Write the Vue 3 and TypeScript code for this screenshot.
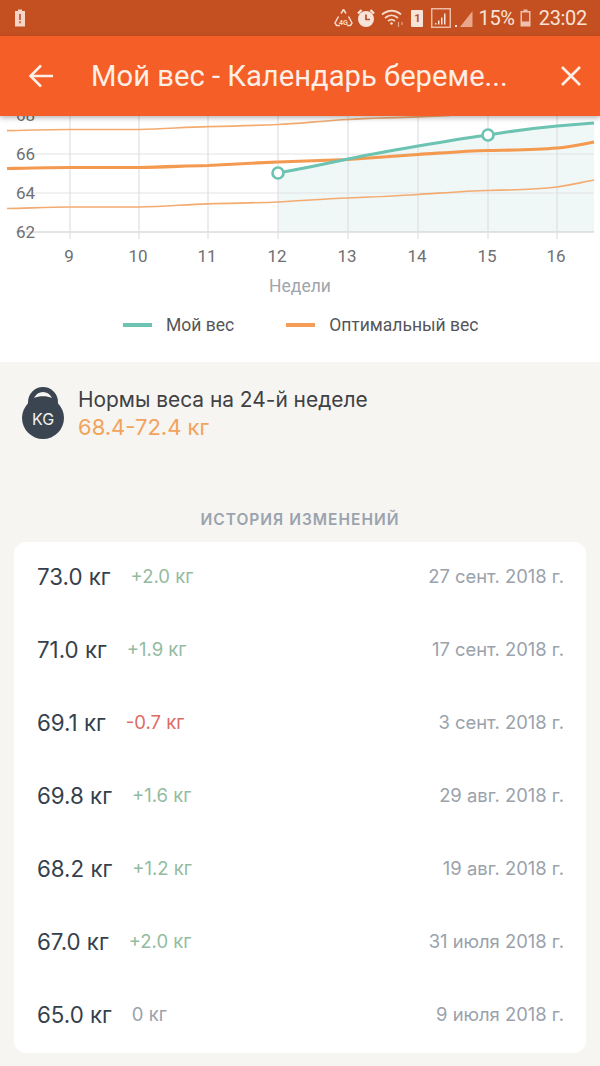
<script setup lang="ts">
interface Row { value: string; delta: string; tone: string; date: string }
const rows: Row[] = [
  { value: '73.0 кг', delta: '+2.0 кг', tone: 'up', date: '27 сент. 2018 г.' },
  { value: '71.0 кг', delta: '+1.9 кг', tone: 'up', date: '17 сент. 2018 г.' },
  { value: '69.1 кг', delta: '-0.7 кг', tone: 'down', date: '3 сент. 2018 г.' },
  { value: '69.8 кг', delta: '+1.6 кг', tone: 'up', date: '29 авг. 2018 г.' },
  { value: '68.2 кг', delta: '+1.2 кг', tone: 'up', date: '19 авг. 2018 г.' },
  { value: '67.0 кг', delta: '+2.0 кг', tone: 'up', date: '31 июля 2018 г.' },
  { value: '65.0 кг', delta: '0 кг', tone: 'zero', date: '9 июля 2018 г.' },
]
const gridX = [70, 139, 208, 278, 348, 418, 488, 557]
const weeks = [9, 10, 11, 12, 13, 14, 15, 16]
const gridY = [
  { y: 115, label: '68' },
  { y: 154, label: '66' },
  { y: 193, label: '64' },
  { y: 232, label: '62' },
]
const teal = 'M278 173 C300 169 325 164 348 159 C372 154 395 150 418 146 C442 142 465 138 488 135 C512 131 535 128 557 126 L594 123'
const tealFill = teal + ' L594 232 L278 232 Z'
const mid = 'M7 168.5 C30 168 50 167.5 70 167.5 L139 167.5 C165 167 185 166 208 165.5 C235 164 255 163 278 162 C300 161 325 160.5 348 159.5 C372 158 395 156 418 154.5 C442 153 465 151 488 150.5 C512 150 535 150 557 148 C572 147 583 144 594 142'
const up = 'M7 130.7 C30 130 50 129.5 70 129.5 L139 129.5 C165 129 185 127 208 126.6 C235 126 255 125.5 278 124.5 C300 123.5 325 120.5 348 119.5 C372 118 395 118 418 116.8 L450 115.5'
const low = 'M7 208.5 C30 208 50 207 70 207 L139 207 C165 206.5 185 204.5 208 203.8 C235 203 255 203 278 202 C300 201 325 198.5 348 198 C372 197 395 196 418 194.5 C442 193 465 191 488 190.5 C512 190 535 189.5 557 187 C572 185 583 182 594 180'
</script>

<template>
  <div class="page">
    <div class="status">
      <svg class="batt-low" width="12" height="18" viewBox="0 0 12 18">
        <path d="M4 0.5h4v1.500h3v15.500H1V2h3z" fill="#f7d4c4" />
        <rect x="5.200" y="5" width="1.600" height="6" fill="#b5502c" />
        <rect x="5.200" y="12.400" width="1.600" height="1.800" fill="#b5502c" />
      </svg>
      <div class="status-right">
        <svg class="ic-net" width="19" height="20" viewBox="0 0 19 20" fill="none" stroke="#f7d9cc" stroke-width="1.500">
          <path d="M9.500 1.500l2.500 4M7 5.500l2.500-4M4.500 8.500L1 15l1.500 2.500H6M14.500 8.500L18 15l-1.500 2.500H13" />
          <text x="9.500" y="17" text-anchor="middle" class="lte">4G</text>
        </svg>
        <svg class="ic-alarm" width="20" height="20" viewBox="0 0 20 20">
          <circle cx="10" cy="11" r="8" fill="#f7e3d8" />
          <path d="M2 5.500L5.500 2M18 5.500L14.500 2" stroke="#f7e3d8" stroke-width="2.400" />
          <path d="M10 6.500V11.500H14" stroke="#b5502c" stroke-width="1.700" fill="none" />
        </svg>
        <svg class="ic-wifi" width="26" height="20" viewBox="0 0 26 20" fill="none" stroke="#f7d9cc" stroke-width="1.800">
          <path d="M1 6.500C7 1.500 14.500 1.500 20 6.500M4 10C8 6.500 13 6.500 17 10M7 13C9.500 11 11.500 11 14 13" />
          <circle cx="10.500" cy="15.500" r="1.300" fill="#f7d9cc" stroke="none" />
          <path d="M17.500 14v5M21 14v3" stroke-width="1.200" stroke="#e8a68c" />
        </svg>
        <span class="sim">1</span>
        <svg class="ic-box" width="20" height="20" viewBox="0 0 20 20">
          <rect x="0.750" y="0.750" width="18.500" height="18.500" fill="none" stroke="#f0c2ae" stroke-width="1.400" />
          <path d="M4 15h1.500v1.500H4zM7 12.500h1.500v4H7zM10 9.500h1.500v7H10zM13 5.500h1.500v11H13z" fill="#f7e3d8" />
        </svg>
        <svg class="signal" width="18" height="20" viewBox="0 0 18 20">
          <path d="M17.500 3v16H5z" fill="#e8a68c" />
          <rect x="0" y="17" width="2" height="2" fill="#f7e3d8" />
        </svg>
        <span class="pct">15%</span>
        <svg class="ic-batt" width="11" height="18" viewBox="0 0 11 18">
          <path d="M3.500 0.500h4V2h3v15.500H.5V2h3z" fill="#f0c2ae" />
          <rect x="2" y="3.500" width="7" height="9" fill="#c4532a" />
        </svg>
        <span class="time">23:02</span>
      </div>
    </div>

    <header class="bar">
      <svg class="back" width="26" height="26" viewBox="0 0 26 26" fill="none" stroke="#fdeee6" stroke-width="2.600">
        <path d="M25 13H2.500M13 2.500L2.500 13 13 23.500" />
      </svg>
      <div class="title">Мой вес - Календарь береме...</div>
      <svg class="close" width="22" height="22" viewBox="0 0 22 22" fill="none" stroke="#fdeee6" stroke-width="2.600">
        <path d="M2 2l18 18M20 2L2 20" />
      </svg>
    </header>

    <section class="chart">
      <svg class="plot" width="600" height="186" viewBox="0 116 600 186">
        <path :d="tealFill" fill="#eff7f7" />
        <line v-for="g in gridY" :key="g.y" x1="16" x2="594" :y1="g.y" :y2="g.y" :stroke="g.y === 232 ? '#c9c9cc' : '#e4e3e6'" stroke-width="1.200" />
        <line v-for="x in gridX" :key="x" :x1="x" :x2="x" y1="116" y2="239" stroke="#dfdee1" stroke-width="1.200" />
        <path :d="up" fill="none" stroke="#f4ab70" stroke-width="1.700" />
        <path :d="low" fill="none" stroke="#f4ab70" stroke-width="1.700" />
        <path :d="mid" fill="none" stroke="#f49a50" stroke-width="3.200" />
        <path :d="teal" fill="none" stroke="#6cc3b2" stroke-width="3" />
        <circle cx="278" cy="173" r="5.500" fill="#fff" stroke="#6cc3b2" stroke-width="2.600" />
        <circle cx="488" cy="135" r="5.500" fill="#fff" stroke="#6cc3b2" stroke-width="2.600" />
        <text v-for="g in gridY" :key="'l' + g.y" x="16" :y="g.y + 6" class="tick">{{ g.label }}</text>
        <text v-for="(w, i) in weeks" :key="w" :x="gridX[i] - 1" y="262" text-anchor="middle" class="tick">{{ w }}</text>
        <text x="300" y="292" text-anchor="middle" class="axis-name">Недели</text>
      </svg>
      <div class="legend">
        <span class="key teal"></span><span class="key-text">Мой вес</span>
        <span class="key orange"></span><span class="key-text">Оптимальный вес</span>
      </div>
    </section>

    <section class="norm">
      <svg class="kettle" width="42" height="52" viewBox="0 0 42 52">
        <circle cx="21" cy="15" r="15" fill="#3b4551" />
        <path d="M12 11c2-4 5-6 9-6s7 2 9 6c-5-2.500-13-2.500-18 0z" fill="#f6f5f1" />
        <circle cx="21" cy="31" r="21" fill="#3b4551" />
        <text x="21" y="38" text-anchor="middle" class="kg">KG</text>
      </svg>
      <div>
        <div class="norm-title">Нормы веса на 24-й неделе</div>
        <div class="norm-value">68.4-72.4 кг</div>
      </div>
    </section>

    <h2 class="history">ИСТОРИЯ ИЗМЕНЕНИЙ</h2>

    <section class="card">
      <div v-for="r in rows" :key="r.date" class="row">
        <span class="value">{{ r.value }}</span>
        <span class="delta" :class="r.tone">{{ r.delta }}</span>
        <span class="date">{{ r.date }}</span>
      </div>
    </section>
  </div>
</template>

<style scoped>
.page {
  width: 600px;
  height: 1066px;
  overflow: hidden;
  background: #f6f5f1;
  font-family: Inter, "Noto Sans", sans-serif;
}
.status {
  height: 36px;
  background: #c44f20;
  display: flex;
  align-items: center;
  justify-content: space-between;
  padding: 0 13px 0 14px;
}
.status-right { display: flex; align-items: center; }
.ic-alarm { margin-left: 3px; }
.ic-wifi { margin-left: 5px; }
.sim { margin-left: 4px; }
.ic-box { margin-left: 8px; }
.signal { margin-left: 4px; }
.ic-batt { margin-left: 5px; }
.lte { font: 700 7px "Roboto", sans-serif; fill: #f7d9cc; stroke: none; }
.sim {
  width: 12px;
  height: 17px;
  background: #f7e3d8;
  border-radius: 1px;
  color: #b5502c;
  font: 700 11px/17px Roboto, sans-serif;
  text-align: center;
}
.pct, .time {
  font-family: Roboto, sans-serif;
  font-size: 20px;
  letter-spacing: -0.3px;
  color: #f7e3d8;
}
.pct { margin-left: 5px; }
.time { margin-left: 8px; }
.bar {
  position: relative;
  z-index: 2;
  height: 80px;
  background: #f55e27;
  box-shadow: 0 2px 5px rgba(0, 0, 0, 0.28);
  display: flex;
  align-items: center;
  padding: 0 18px 0 28px;
}
.title {
  flex: 1;
  margin-left: 37px;
  font-family: Roboto, sans-serif;
  font-size: 29.200px;
  color: #fdeee6;
  white-space: nowrap;
}
.chart {
  height: 246px;
  background: #fff;
}
.plot { display: block; }
.tick { font: 17px Roboto, sans-serif; fill: #6f6f72; }
.axis-name { font: 17.500px Roboto, sans-serif; fill: #9fa5ac; }
.legend {
  display: flex;
  align-items: center;
  height: 46px;
  padding-left: 123px;
}
.key { width: 29px; height: 4px; }
.key.teal { background: #6cc3b2; }
.key.orange { background: #f59d56; }
.key-text {
  font-family: Roboto, sans-serif;
  font-size: 17.500px;
  color: #55565a;
  margin-left: 14px;
  margin-right: 52px;
}
.kg { font: 400 16px Inter, sans-serif; fill: #f2f2f0; }
.norm {
  display: flex;
  align-items: flex-start;
  gap: 14px;
  padding: 25px 0 0 22px;
  height: 123px;
  box-sizing: content-box;
}
.norm-title {
  font-size: 20.900px;
  line-height: 25px;
  color: #3f4144;
}
.norm-value {
  font-size: 22px;
  line-height: 30px;
  color: #f2a35c;
}
.history {
  margin: 0;
  height: 32px;
  text-align: center;
  font-size: 15.500px;
  line-height: 20px;
  font-weight: 600;
  letter-spacing: 1px;
  color: #9aa3ae;
}
.card {
  margin: 0 14px;
  background: #fff;
  border-radius: 12px;
}
.row {
  box-sizing: border-box;
  height: 73px;
  display: flex;
  align-items: center;
  padding: 0 22px 5px 23px;
}
.value { font-size: 22.300px; color: #363f4c; margin-right: 20px; }
.delta { font-size: 18.500px; font-weight: 400; }
.delta.up { color: #93bb9f; }
.delta.down { color: #df6a65; }
.delta.zero { color: #9aa2ac; }
.date { margin-left: auto; font-size: 18.400px; color: #9aa2ac; }
</style>

<style>
body { margin: 0; }
</style>
